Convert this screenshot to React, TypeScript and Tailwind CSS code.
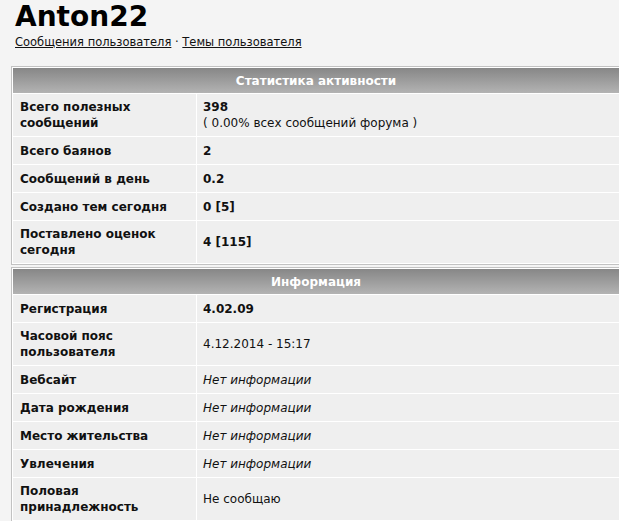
import React from "react";

type Row = { label: string; value: React.ReactNode; tall?: boolean };

const activity: Row[] = [
  {
    label: "Всего полезных сообщений",
    tall: true,
    value: (
      <div>
        <div className="font-bold">398</div>
        <div>( 0.00% всех сообщений форума )</div>
      </div>
    ),
  },
  { label: "Всего баянов", value: <span className="font-bold">2</span> },
  { label: "Сообщений в день", value: <span className="font-bold">0.2</span> },
  { label: "Создано тем сегодня", value: <span className="font-bold">0 [5]</span> },
  { label: "Поставлено оценок сегодня", tall: true, value: <span className="font-bold">4 [115]</span> },
];

const noInfo = <span className="italic">Нет информации</span>;

const info: Row[] = [
  { label: "Регистрация", value: <span className="font-bold">4.02.09</span> },
  { label: "Часовой пояс пользователя", tall: true, value: <span>4.12.2014 - 15:17</span> },
  { label: "Вебсайт", value: noInfo },
  { label: "Дата рождения", value: noInfo },
  { label: "Место жительства", value: noInfo },
  { label: "Увлечения", value: noInfo },
  { label: "Половая принадлежность", tall: true, value: <span>Не сообщаю</span> },
];

function Panel({ title, rows }: { title: string; rows: Row[] }) {
  return (
    <div className="w-[610px] border border-[#c2c2c2] bg-white p-px">
      <div className="grid grid-cols-[183px_1fr] gap-px bg-white">
        <div className="col-span-2 flex h-[25px] items-center justify-center bg-gradient-to-b from-[#878787] to-[#b3b3b3] text-[12px] font-bold text-white">
          {title}
        </div>
        {rows.map((r) => (
          <React.Fragment key={r.label}>
            <div
              className={`flex items-center bg-[#efefef] pl-[7px] pr-2 font-bold ${
                r.tall ? "h-[42px]" : "h-[27px]"
              }`}
            >
              <span className="max-w-[160px]">{r.label}</span>
            </div>
            <div
              className={`flex items-center bg-[#efefef] pl-[6px] ${r.tall ? "h-[42px]" : "h-[27px]"}`}
            >
              {r.value}
            </div>
          </React.Fragment>
        ))}
      </div>
    </div>
  );
}

export default function App() {
  return (
    <div
      className="h-[521px] w-[619px] overflow-hidden bg-[#f4f4f4] text-[12px] leading-[16px] text-[#111]"
      style={{ fontFamily: '"DejaVu Sans", Verdana, sans-serif' }}
    >
      <div className="pl-[15px] pt-[1px]">
        <h1 className="text-[28px] font-bold leading-[32px] text-black">Anton22</h1>
        <div className="mt-[1px] text-[11.5px] leading-[16px]">
          <a href="#" className="text-[#111] underline">
            Сообщения пользователя
          </a>
          {" · "}
          <a href="#" className="text-[#111] underline">
            Темы пользователя
          </a>
        </div>
      </div>
      <div className="mt-[16px] flex flex-col gap-[2px] pl-[11px]">
        <Panel title="Статистика активности" rows={activity} />
        <Panel title="Информация" rows={info} />
      </div>
    </div>
  );
}
